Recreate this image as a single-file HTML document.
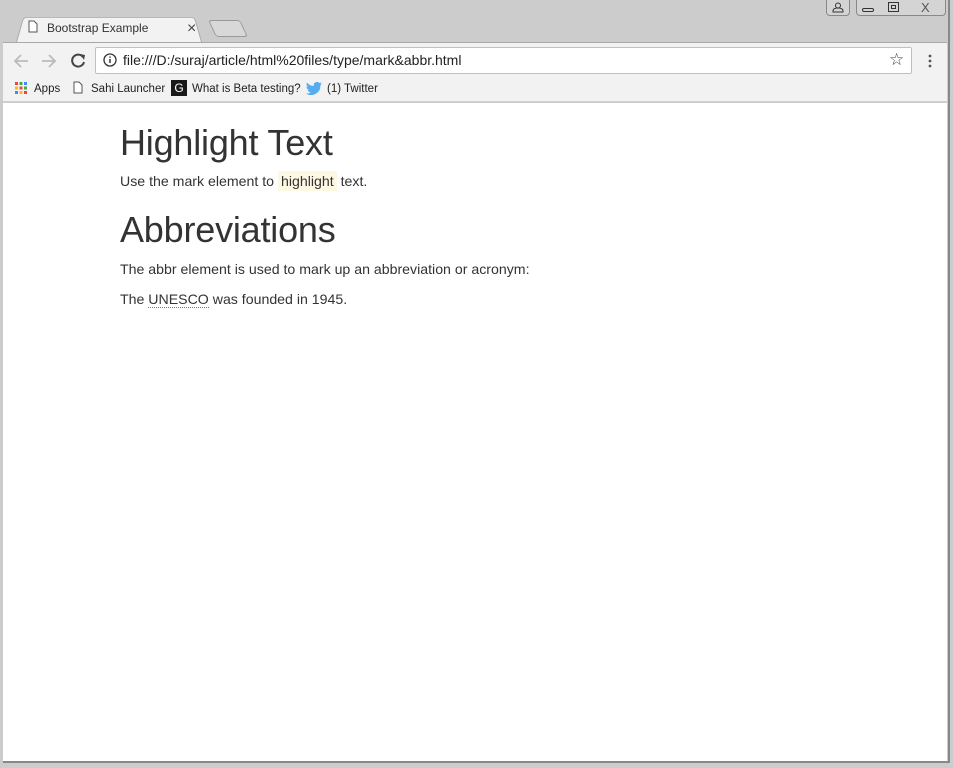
<!DOCTYPE html>
<html><head><meta charset="utf-8"><style>
*{margin:0;padding:0;box-sizing:border-box}
body{width:953px;height:768px;background:#fff;font-family:"Liberation Sans",Arial,sans-serif;position:relative;overflow:hidden}
.frame{position:absolute;left:0;top:0;width:953px;height:768px;background:#cccccc}
.win{position:absolute;left:3px;top:0;width:947px;height:763px;border-right:2px solid #888;border-bottom:2px solid #888}
.tab{position:absolute;left:16px;top:14px;width:186px;height:28px;background:#f2f2f2;border:1px solid #a8a8a8;border-bottom:none;border-radius:4px 4px 0 0;transform:perspective(80px) rotateX(14deg);transform-origin:bottom}
.tabt{position:absolute;left:47px;top:21px;font-size:12px;color:#333}
.tabx{position:absolute;left:187px;top:20px;font-size:16px;color:#444}
.newtab{position:absolute;left:212px;top:20px;width:32px;height:17px;border:1px solid #999;border-radius:3px;background:#d8d8d8;transform:skewX(25deg)}
.toolbar{position:absolute;left:3px;top:42px;width:944px;height:60px;background:#f2f2f2;border-top:1px solid #a8a8a8;border-bottom:1px solid #d0d0d0}
.omni{position:absolute;left:95px;top:47px;width:817px;height:27px;background:#fff;border:1px solid #c0c0c0;border-radius:2px}
.url{position:absolute;left:123px;top:52px;font-size:14px;color:#222}
.bm{position:absolute;top:83px;font-size:11.5px;color:#222}
.wb{position:absolute;top:0;height:16px;border:1px solid #888;border-top:none;border-radius:0 0 4px 4px;background:#d4d4d4}
.content{position:absolute;left:3px;top:103px;width:944px;height:658px;background:#fff}
h1{position:absolute;left:120px;font-size:36px;font-weight:normal;color:#333;letter-spacing:-0.2px}
p{position:absolute;left:120px;font-size:14.15px;color:#333}
mark{background:#fcf8e3;padding:2px 3px;color:#333}
abbr{text-decoration:none;border-bottom:1px dotted #777}
</style></head><body>
<div class="frame"></div>
<div class="win"></div>
<div class="tab"></div>
<svg style="position:absolute;left:28px;top:20px" width="10" height="13"><path d="M1 1h5l3 3v8H1z" fill="#fff" stroke="#555"/></svg>
<div class="tabt">Bootstrap Example</div>
<div class="tabx">×</div>
<div class="newtab"></div>
<div class="wb" style="left:826px;width:24px"></div>
<svg style="position:absolute;left:832px;top:2px" width="12" height="11"><circle cx="6" cy="3.5" r="2.5" fill="none" stroke="#333"/><path d="M1 10h10v-1c0-2-2-3-5-3s-5 1-5 3z" fill="none" stroke="#333"/></svg>
<div class="wb" style="left:856px;width:90px"></div>
<div style="position:absolute;left:862px;top:8px;width:12px;height:4px;border:1px solid #333;border-radius:2px"></div>
<div style="position:absolute;left:888px;top:2px;width:11px;height:10px;border:1px solid #333"></div>
<div style="position:absolute;left:891px;top:5px;width:5px;height:4px;border:1px solid #333"></div>
<div style="position:absolute;left:921px;top:0px;font-size:13px;color:#555">X</div>
<div class="toolbar"></div>
<svg style="position:absolute;left:12px;top:52px" width="75" height="18"><path d="M3 9h13M9 3L3 9l6 6" stroke="#bbb" stroke-width="1.8" fill="none"/><path d="M30 9h13M37 3l6 6-6 6" stroke="#bbb" stroke-width="1.8" fill="none"/><path d="M71 5a6 6 0 1 0 1 5" stroke="#444" stroke-width="2" fill="none"/><path d="M68 2l5 1-1 5z" fill="#444"/></svg>
<div class="omni"></div>
<svg style="position:absolute;left:103px;top:53px" width="14" height="14"><circle cx="7" cy="7" r="6" fill="none" stroke="#333" stroke-width="1.3"/><path d="M7 6v4M7 3.5v1.3" stroke="#333" stroke-width="1.5"/></svg>
<div class="url">file:///D:/suraj/article/html%20files/type/mark&amp;abbr.html</div>
<div style="position:absolute;left:889px;top:50px;font-size:17px;color:#444">☆</div>
<svg style="position:absolute;left:928px;top:54px" width="4" height="14"><circle cx="2" cy="2" r="1.4" fill="#555"/><circle cx="2" cy="7" r="1.4" fill="#555"/><circle cx="2" cy="12" r="1.4" fill="#555"/></svg>
<svg style="position:absolute;left:15px;top:82px" width="12" height="12"><g><rect x="0" y="0" width="3" height="3" fill="#e44"/><rect x="4.5" y="0" width="3" height="3" fill="#4a4"/><rect x="9" y="0" width="3" height="3" fill="#48f"/><rect x="0" y="4.5" width="3" height="3" fill="#fb0"/><rect x="4.5" y="4.5" width="3" height="3" fill="#e44"/><rect x="9" y="4.5" width="3" height="3" fill="#4a4"/><rect x="0" y="9" width="3" height="3" fill="#48f"/><rect x="4.5" y="9" width="3" height="3" fill="#fb0"/><rect x="9" y="9" width="3" height="3" fill="#e44"/></g></svg>
<div class="bm" style="left:34px">Apps</div>
<svg style="position:absolute;left:73px;top:81px" width="10" height="13"><path d="M1 1h5l3 3v8H1z" fill="#fff" stroke="#555"/></svg>
<div class="bm" style="left:91px">Sahi Launcher</div>
<div style="position:absolute;left:171px;top:80px;width:16px;height:16px;background:#1a1a1a;color:#fff;font-size:12px;text-align:center;line-height:16px">G</div>
<div class="bm" style="left:192px">What is Beta testing?</div>
<svg style="position:absolute;left:306px;top:82px" width="16" height="13"><path d="M16 1.5c-.6.3-1.2.4-1.9.5.7-.4 1.2-1 1.4-1.8-.6.4-1.3.6-2.1.8A3.3 3.3 0 0 0 7.8 4 9.3 9.3 0 0 1 1 .6a3.3 3.3 0 0 0 1 4.4c-.5 0-1-.2-1.5-.4 0 1.6 1.1 2.9 2.6 3.2-.5.1-1 .2-1.5.1.4 1.3 1.6 2.3 3.1 2.3A6.6 6.6 0 0 1 0 11.5 9.3 9.3 0 0 0 14.4 3.2z" fill="#55acee"/></svg>
<div class="bm" style="left:327px">(1) Twitter</div>
<div class="content"></div>
<h1 style="top:122px">Highlight Text</h1>
<p style="top:173px">Use the mark element to <mark>highlight</mark> text.</p>
<h1 style="top:209px">Abbreviations</h1>
<p style="top:261px">The abbr element is used to mark up an abbreviation or acronym:</p>
<p style="top:291px">The <abbr>UNESCO</abbr> was founded in 1945.</p>
</body></html>
